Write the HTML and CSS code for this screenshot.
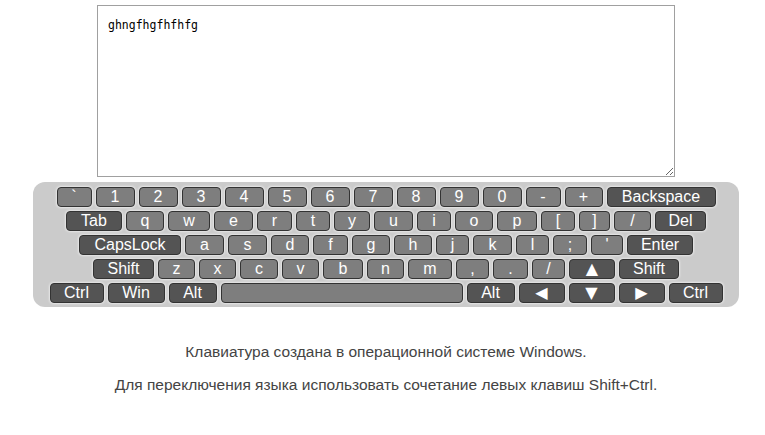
FILE: index.html
```html
<!DOCTYPE html>
<html lang="ru">
<head>
<meta charset="utf-8">
<title>Клавиатура</title>
<link rel="stylesheet" href="styles.css">
</head>
<body>
<div class="page">
  <textarea class="editor">ghngfhgfhfhfg</textarea>
  <div class="keyboard">
    <div class="row">
      <span class="key w35">`</span><span class="key w39">1</span><span class="key w39">2</span><span class="key w39">3</span><span class="key w39">4</span><span class="key w39">5</span><span class="key w39">6</span><span class="key w39">7</span><span class="key w39">8</span><span class="key w39">9</span><span class="key w39">0</span><span class="key w35">-</span><span class="key w38">+</span><span class="key fn w109">Backspace</span>
    </div>
    <div class="row">
      <span class="key fn w56">Tab</span><span class="key w38">q</span><span class="key w42">w</span><span class="key w39">e</span><span class="key w35">r</span><span class="key w34">t</span><span class="key w36">y</span><span class="key w39">u</span><span class="key w34">i</span><span class="key w38">o</span><span class="key w40">p</span><span class="key w34">[</span><span class="key w31">]</span><span class="key w37">/</span><span class="key fn w51">Del</span>
    </div>
    <div class="row">
      <span class="key fn w102">CapsLock</span><span class="key w39">a</span><span class="key w39">s</span><span class="key w38">d</span><span class="key w35">f</span><span class="key w38">g</span><span class="key w38">h</span><span class="key w33">j</span><span class="key w39">k</span><span class="key w33">l</span><span class="key w34">;</span><span class="key w32">'</span><span class="key fn w66">Enter</span>
    </div>
    <div class="row">
      <span class="key fn w61">Shift</span><span class="key w37">z</span><span class="key w37">x</span><span class="key w38">c</span><span class="key w37">v</span><span class="key w40">b</span><span class="key w37">n</span><span class="key w44">m</span><span class="key w33">,</span><span class="key w35">.</span><span class="key w33">/</span><span class="key fn w46 arrow">▲</span><span class="key fn w60">Shift</span>
    </div>
    <div class="row">
      <span class="key fn w54">Ctrl</span><span class="key fn w57">Win</span><span class="key fn w48">Alt</span><span class="key w242"></span><span class="key fn w48">Alt</span><span class="key fn w46 arrow">◀</span><span class="key fn w46 arrow">▼</span><span class="key fn w46 arrow">▶</span><span class="key fn w54">Ctrl</span>
    </div>
  </div>
  <div class="notes">
    <p>Клавиатура создана в операционной системе Windows.</p>
    <p>Для переключения языка использовать сочетание левых клавиш Shift+Ctrl.</p>
  </div>
</div>
</body>
</html>
```

FILE: styles.css
```css
html, body {
  margin: 0;
  padding: 0;
  background: #ffffff;
}

.page {
  width: 706px;
  margin-left: 33px;
  padding-top: 5px;
  font-family: "Liberation Sans", Arial, sans-serif;
}

.editor {
  display: block;
  box-sizing: border-box;
  width: 578px;
  height: 172px;
  margin: 0 0 0 64px;
  padding: 12px 10px;
  border: 1px solid #a0a0a0;
  font-family: "DejaVu Sans Mono", monospace;
  font-size: 11.5px;
  color: #000;
  resize: both;
}

.keyboard {
  box-sizing: border-box;
  margin-top: 5px;
  height: 125px;
  padding: 5px 0 4px;
  background: #cbcbcb;
  border-radius: 12px;
  display: flex;
  flex-direction: column;
  gap: 4px;
}

.row {
  display: flex;
  justify-content: center;
  gap: 4px;
  height: 20px;
}

.key {
  box-sizing: border-box;
  height: 20px;
  display: flex;
  align-items: center;
  justify-content: center;
  background: #7e7e7e;
  border: 1px solid #333333;
  border-radius: 4px;
  box-shadow: 0 0 2px 1px #e8e8e8;
  color: #ffffff;
  font-size: 16px;
  line-height: 1;
}

.key.fn {
  background: #545454;
}

.arrow {
  font-family: "DejaVu Sans", sans-serif;
  font-size: 16px;
}

.w31 { width: 31px; }
.w32 { width: 32px; }
.w33 { width: 33px; }
.w34 { width: 34px; }
.w35 { width: 35px; }
.w36 { width: 36px; }
.w37 { width: 37px; }
.w38 { width: 38px; }
.w39 { width: 39px; }
.w40 { width: 40px; }
.w42 { width: 42px; }
.w44 { width: 44px; }
.w46 { width: 46px; }
.w48 { width: 48px; }
.w51 { width: 51px; }
.w54 { width: 54px; }
.w56 { width: 56px; }
.w57 { width: 57px; }
.w60 { width: 60px; }
.w61 { width: 61px; }
.w66 { width: 66px; }
.w102 { width: 102px; }
.w109 { width: 109px; }
.w242 { width: 242px; }

.notes {
  padding-top: 36px;
  text-align: center;
  color: #444444;
  font-size: 15.5px;
}

.notes p {
  margin: 0 0 15px;
  line-height: 18px;
}
```
